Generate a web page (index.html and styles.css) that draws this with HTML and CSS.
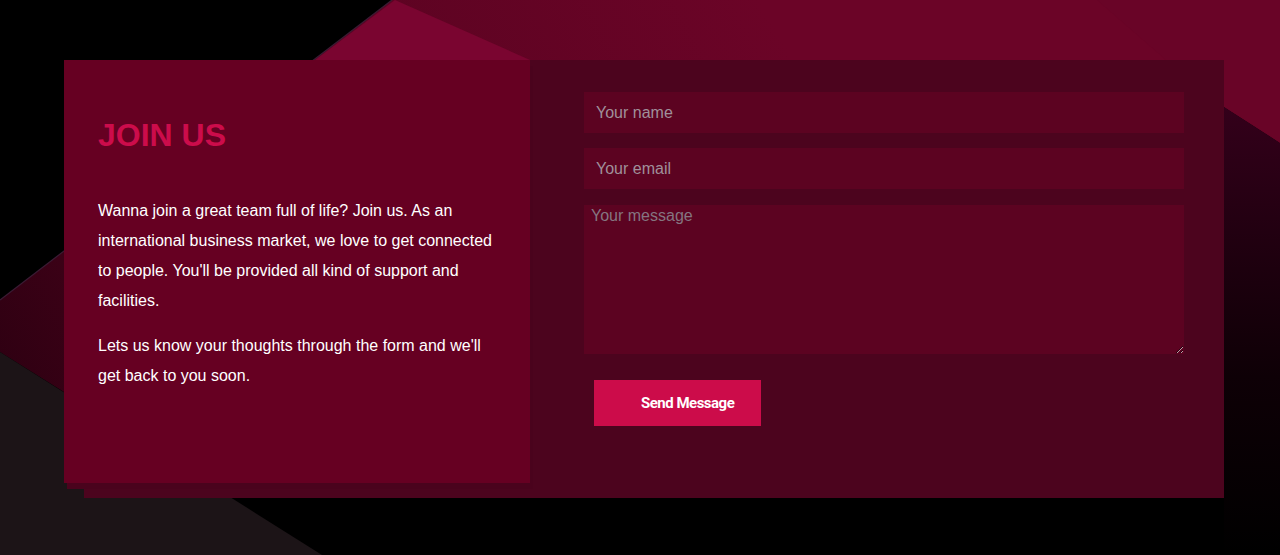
FILE: index.html
```html
<!DOCTYPE html>
<html lang="en">
<head>
  <meta charset="UTF-8">
  <meta name="viewport" content="width=device-width, initial-scale=1.0">
  <title>Join Us</title>
  <link rel="stylesheet" href="styles.css">
</head>
<body>
  <div class="backdrop">
    <svg viewBox="0 0 1280 555" width="1280" height="555" preserveAspectRatio="none">
      <defs>
        <linearGradient id="crimson" gradientUnits="userSpaceOnUse" x1="760" y1="0" x2="0" y2="420">
          <stop offset="0" stop-color="#6b0427"/>
          <stop offset="0.55" stop-color="#580320"/>
          <stop offset="1" stop-color="#2c0011"/>
        </linearGradient>
        <linearGradient id="shade" gradientUnits="userSpaceOnUse" x1="0" y1="110" x2="0" y2="555">
          <stop offset="0" stop-color="#33001a"/>
          <stop offset="0.6" stop-color="#0e0006"/>
          <stop offset="1" stop-color="#000"/>
        </linearGradient>
      </defs>
      <rect width="1280" height="555" fill="#000"/>
      <polygon points="0,300 392,0 1280,0 1280,143 1224,107 1224,470 64,470 64,392 0,352" fill="url(#crimson)"/>
      <polygon points="315,60 395,0 530,60" fill="#7a0530"/>
      <polygon points="1097,0 1280,0 1280,143 1224,107 1166,60" fill="#690427"/>
      <polygon points="1224,107 1280,143 1280,555 1224,555" fill="url(#shade)"/>
      <polygon points="0,352 322,555 0,555" fill="#1c1417"/>
      <line x1="0" y1="300" x2="392" y2="0" stroke="#3b1b34" stroke-width="1.2"/>
    </svg>
  </div>

  <div class="page">
    <div class="contact-box">
      <div class="info">
        <h2 class="info-title">JOIN US</h2>
        <p>Wanna join a great team full of life? Join us. As an international business market, we love to get connected to people. You'll be provided all kind of support and facilities.</p>
        <p>Lets us know your thoughts through the form and we'll get back to you soon.</p>
      </div>

      <form class="contact-form" onsubmit="return false">
        <input type="text" class="field" placeholder="Your name">
        <input type="email" class="field" placeholder="Your email">
        <textarea class="field message" placeholder="Your message"></textarea>
        <button type="submit" class="send-btn">Send Message</button>
      </form>
    </div>
  </div>
</body>
</html>
```

FILE: styles.css
```css
html, body {
  margin: 0;
  padding: 0;
}

body {
  width: 1280px;
  height: 555px;
  overflow: hidden;
  background: #000;
  font-family: "Liberation Sans", Arial, sans-serif;
  position: relative;
}

.backdrop {
  position: absolute;
  inset: 0;
  z-index: 0;
}

.backdrop svg {
  display: block;
}

.page {
  position: relative;
  z-index: 1;
  padding: 60px 0 0 84px;
}

.contact-box {
  display: flex;
  width: 1140px;
  height: 438px;
  background-color: #4c041e;
}

.info {
  margin-left: -20px;
  width: 466px;
  height: 423px;
  box-sizing: border-box;
  padding: 57px 34px 0;
  background-color: #660022;
  box-shadow: 3px 6px 0 #4a031d;
  color: #fff;
}

.info-title {
  margin: 0 0 43px;
  font-size: 32px;
  line-height: 36px;
  font-weight: bold;
  color: #cc0c4b;
}

.info p {
  margin: 0 0 15px;
  font-size: 16px;
  line-height: 30px;
}

.contact-form {
  flex: 1;
  display: flex;
  flex-direction: column;
  align-items: flex-start;
  padding: 32px 40px 0 54px;
}

.field {
  width: 600px;
  height: 41px;
  box-sizing: border-box;
  margin: 0 0 15px;
  padding: 0 12px;
  border: none;
  outline: none;
  background-color: #5c0321;
  color: #fff;
  font-family: "Liberation Sans", Arial, sans-serif;
  font-size: 16px;
}

.field::placeholder {
  color: #a0909a;
}

input.field:nth-child(2) {
  margin-bottom: 16px;
}

.message {
  height: 149px;
  padding: 2px 7px;
  line-height: 18px;
  margin-bottom: 26px;
}

.message::placeholder {
  color: #857580;
}

.send-btn {
  margin-left: 10px;
  width: 167px;
  height: 46px;
  padding: 0 0 0 47px;
  text-align: left;
  border: none;
  background-color: #cc0c4a;
  color: #fff;
  font-family: Roboto, "Liberation Sans", sans-serif;
  font-weight: bold;
  font-size: 15px;
  letter-spacing: -0.5px;
  cursor: pointer;
}
```
